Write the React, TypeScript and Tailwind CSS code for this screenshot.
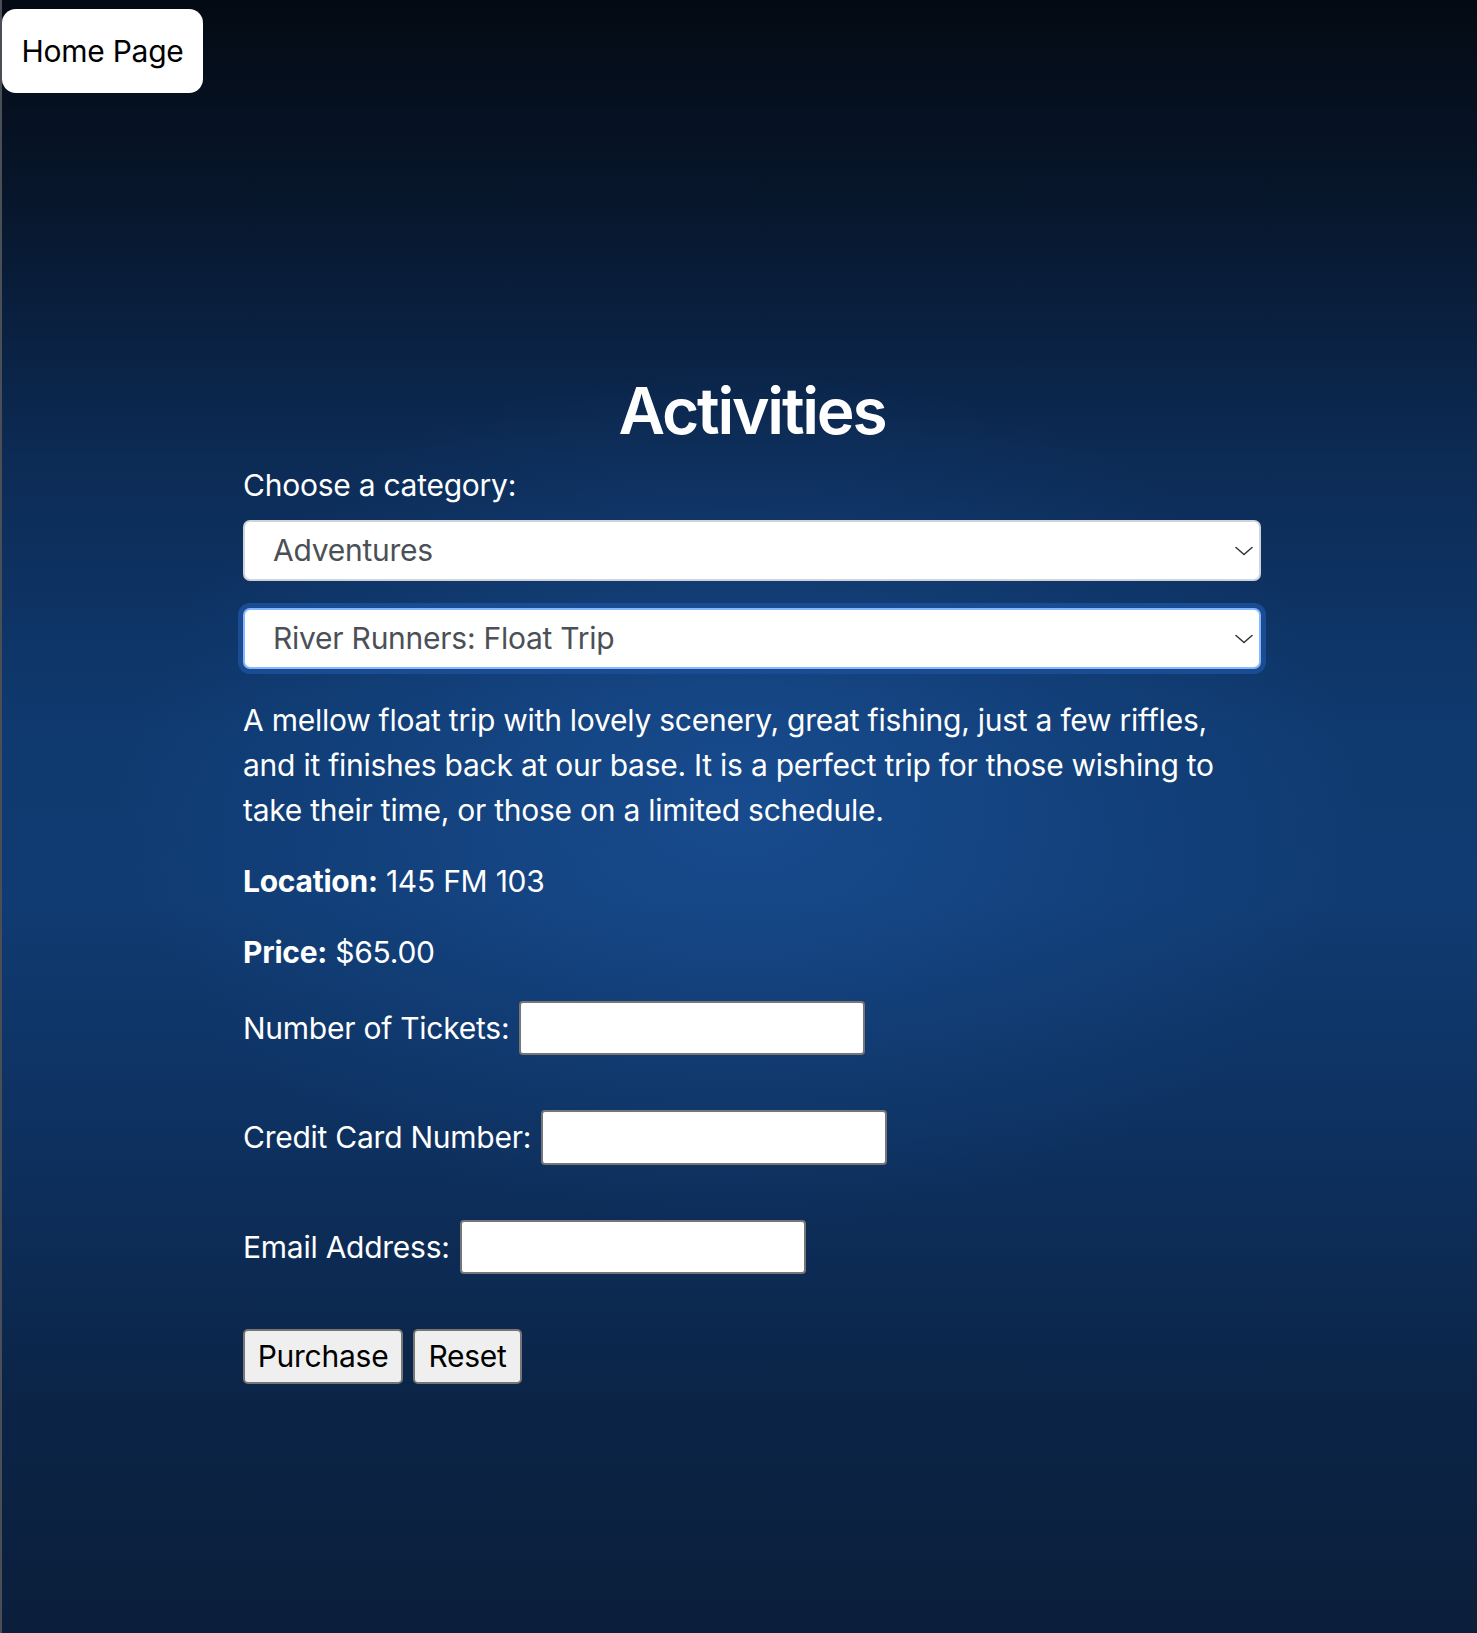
import React from "react";

function Chevron() {
  return (
    <svg
      className="pointer-events-none absolute right-[8px] top-1/2 -translate-y-1/2"
      width="18"
      height="10"
      viewBox="0 0 18 10"
      fill="none"
    >
      <path d="M1 1.5 L9 8.5 L17 1.5" stroke="#343a40" strokeWidth="1.6" strokeLinecap="round" strokeLinejoin="round" />
    </svg>
  );
}

export default function App() {
  return (
    <div
      className="min-h-[1633px] w-full border-l-2 border-[#4a4e55] tracking-[-0.25px] text-white [font-family:Inter,'Noto_Sans',sans-serif] [background:radial-gradient(ellipse_620px_430px_at_50%_49%,rgba(34,96,178,0.45)_0%,rgba(34,96,178,0.18)_55%,rgba(34,96,178,0)_100%),linear-gradient(to_bottom,#040a13_0%,#07162b_12%,#0c2b55_28%,#0f3a70_45%,#103b72_55%,#0d2f5c_72%,#0b2446_86%,#0b1f3b_100%)]"
    >
      <div className="pt-[9px]">
        <a
          href="#"
          className="inline-flex h-[84px] w-[201px] items-center justify-center rounded-[14px] bg-white text-[30px] text-black"
        >
          Home Page
        </a>
      </div>

      <div className="ml-[241px] mt-[278px] w-[1018px]">
        <h1 className="text-center text-[64px] font-semibold leading-[80px] tracking-[-2.2px]">Activities</h1>

        <label className="mt-[12px] block text-[30px] leading-[45px]">Choose a category:</label>

        <div className="relative mt-[12px]">
          <select className="block h-[61px] w-full appearance-none rounded-[7px] border-2 border-[#ced4da] bg-white pl-[28px] text-[30px] text-[#4b5056] outline-none">
            <option>Adventures</option>
          </select>
          <Chevron />
        </div>

        <div className="relative mt-[27px]">
          <select className="block h-[61px] w-full appearance-none rounded-[7px] border-2 border-[#86b7fe] bg-white pl-[28px] text-[30px] text-[#4b5056] outline-none ring-[5px] ring-[#1a4c93]">
            <option>River Runners: Float Trip</option>
          </select>
          <Chevron />
        </div>

        <p className="mt-[29px] text-[30px] leading-[45px]">
          A mellow float trip with lovely scenery, great fishing, just a few riffles, and it finishes back at our base. It is a perfect trip for those wishing to take their time, or those on a limited schedule.
        </p>

        <p className="mt-[26px] text-[30px] leading-[45px]">
          <span className="font-bold">Location:</span> 145 FM 103
        </p>

        <p className="mt-[26px] text-[30px] leading-[45px]">
          <span className="font-bold">Price:</span> $65.00
        </p>

        <div className="mt-[26px] flex flex-col gap-[55px]">
          <div className="flex items-center gap-[10px]">
            <label className="text-[30px] leading-[45px]">Number of Tickets:</label>
            <input type="text" className="h-[54px] w-[346px] rounded-[4px] border-2 border-[#767676] bg-white" />
          </div>
          <div className="flex items-center gap-[10px]">
            <label className="text-[30px] leading-[45px]">Credit Card Number:</label>
            <input type="text" className="h-[55px] w-[346px] rounded-[4px] border-2 border-[#767676] bg-white" />
          </div>
          <div className="flex items-center gap-[10px]">
            <label className="text-[30px] leading-[45px]">Email Address:</label>
            <input type="text" className="h-[54px] w-[346px] rounded-[4px] border-2 border-[#767676] bg-white" />
          </div>
          <div className="flex items-center gap-[10px]">
            <button className="h-[55px] w-[160px] rounded-[5px] border-2 border-[#767676] bg-[#efefef] text-[30px] text-black">
              Purchase
            </button>
            <button className="h-[55px] w-[109px] rounded-[5px] border-2 border-[#767676] bg-[#efefef] text-[30px] text-black">
              Reset
            </button>
          </div>
        </div>
      </div>
    </div>
  );
}
